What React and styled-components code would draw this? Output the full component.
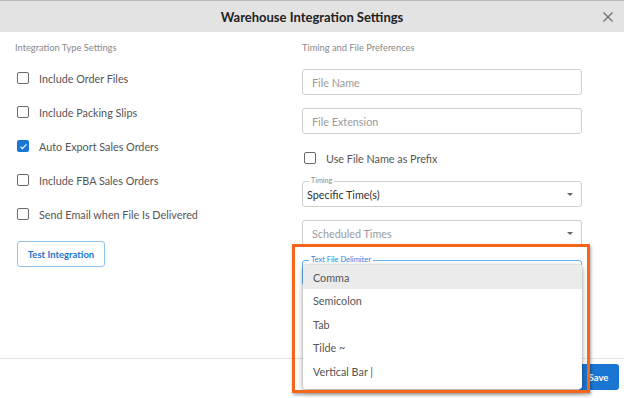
import React from "react";
import styled, { createGlobalStyle } from "styled-components";

const GlobalStyle = createGlobalStyle`
  html, body {
    margin: 0;
    padding: 0;
    background: #ffffff;
  }
  body {
    font-family: Lato, "Open Sans", "Liberation Sans", sans-serif;
  }
`;

const Modal = styled.div`
  position: relative;
  width: 624px;
  height: 398px;
  overflow: hidden;
  background: #ffffff;
  display: flex;
  flex-direction: column;
`;

const Header = styled.div`
  height: 31px;
  border-top: 1px solid #bdbdbd;
  background: #e3e3e3;
  display: flex;
  align-items: center;
  justify-content: center;
  position: relative;
  flex-shrink: 0;
`;

const Title = styled.h1`
  margin: 0;
  font-size: 13px;
  font-weight: 700;
  color: #222222;
`;

const CloseButton = styled.button`
  position: absolute;
  right: 10px;
  top: 10px;
  width: 12px;
  height: 12px;
  padding: 0;
  border: none;
  background: transparent;
  display: flex;
  cursor: pointer;
`;

const Body = styled.div`
  flex: 1;
  display: grid;
  grid-template-columns: 287px 280px;
  padding: 10px 15px 0;
`;

const Column = styled.div`
  display: flex;
  flex-direction: column;
  align-items: stretch;
`;

const SectionTitle = styled.div`
  font-size: 9.3px;
  line-height: 12px;
  color: #8a8a8a;
`;

const CheckList = styled.div`
  margin-top: 7px;
  display: flex;
  flex-direction: column;
  padding-left: 2px;
`;

const CheckRow = styled.label`
  height: ${(p) => p.$height || 34}px;
  margin-top: ${(p) => p.$top || 0}px;
  display: flex;
  align-items: center;
  gap: 10px;
  font-size: 10.8px;
  color: #555555;
`;

const Box = styled.span`
  width: 12px;
  height: 12px;
  box-sizing: border-box;
  border-radius: 2px;
  border: ${(p) => (p.$checked ? "none" : "1.5px solid #6a6a6a")};
  background: ${(p) => (p.$checked ? "#1976d2" : "#ffffff")};
  display: flex;
  align-items: center;
  justify-content: center;
  flex-shrink: 0;
`;

const OutlineButton = styled.button`
  align-self: flex-start;
  margin: 10px 0 0 2px;
  width: 88px;
  height: 26px;
  border: 1px solid #90c2ee;
  border-radius: 3px;
  background: #ffffff;
  color: #1976d2;
  font-family: inherit;
  font-size: 9.5px;
  font-weight: 700;
  cursor: pointer;
`;

const Field = styled.div`
  position: relative;
  height: 26px;
  margin-top: ${(p) => p.$top}px;
  box-sizing: border-box;
  border: 1px solid #cfcfcf;
  border-radius: 3px;
  display: flex;
  align-items: center;
  padding-left: ${(p) => (p.$filled ? 4 : 9)}px;
  padding-right: 8px;
  font-size: 10.8px;
  color: ${(p) => (p.$filled ? "#333333" : "#9a9a9a")};
`;

const FieldText = styled.span`
  flex: 1;
`;

const FloatLabel = styled.span`
  position: absolute;
  left: 6px;
  top: -6px;
  padding: 0 2px;
  background: #ffffff;
  font-size: ${(p) => (p.$blue ? 7.5 : 7.2)}px;
  line-height: 9px;
  color: ${(p) => (p.$blue ? "#1e88e5" : "#8a8a8a")};
`;

const Caret = styled.span`
  width: 0;
  height: 0;
  border-left: 3.5px solid transparent;
  border-right: 3.5px solid transparent;
  border-top: 3.5px solid #666666;
`;

const Footer = styled.div`
  height: 34px;
  border-top: 1px solid #e2e2e2;
  display: flex;
  justify-content: flex-end;
  align-items: flex-start;
  padding: 5px 5px 0;
  flex-shrink: 0;
`;

const PrimaryButton = styled.button`
  width: 41px;
  height: 26px;
  border: none;
  border-radius: 3px;
  background: #1976d2;
  color: #ffffff;
  font-family: inherit;
  font-size: 9.5px;
  font-weight: 700;
  padding: 0;
  cursor: pointer;
`;

const DelimiterField = styled.div`
  position: absolute;
  left: 302px;
  top: 260px;
  width: 280px;
  height: 26px;
  box-sizing: border-box;
  border: 1px solid #64b5f6;
  border-radius: 3px;
  background: #ffffff;
`;

const Menu = styled.ul`
  position: absolute;
  left: 303px;
  top: 265px;
  width: 279px;
  margin: 0;
  padding: 0 0 6px;
  list-style: none;
  background: #ffffff;
  border-radius: 3px;
  box-shadow: 0 2px 6px rgba(0, 0, 0, 0.35), 0 0 2px rgba(0, 0, 0, 0.2);
`;

const MenuItem = styled.li`
  height: ${(p) => (p.$active ? 24 : 23.5)}px;
  display: flex;
  align-items: center;
  padding-left: 10px;
  font-size: 10.8px;
  color: #555555;
  background: ${(p) => (p.$active ? "#ebebeb" : "transparent")};
`;

const Highlight = styled.div`
  position: absolute;
  left: 292px;
  top: 244px;
  width: 298px;
  height: 149px;
  box-sizing: border-box;
  border: 3px solid #f5661a;
  box-shadow: 1px 2px 3px rgba(0, 0, 0, 0.35);
  pointer-events: none;
`;

const CheckMark = () => (
  <svg width="9" height="9" viewBox="0 0 24 24">
    <path d="M4 12.5l5 5L20 6.5" fill="none" stroke="#fff" strokeWidth="3.2" />
  </svg>
);

const Check = ({ checked, label, height, top }) => (
  <CheckRow $height={height} $top={top}>
    <Box $checked={checked}>{checked && <CheckMark />}</Box>
    {label}
  </CheckRow>
);

const leftOptions = [
  { label: "Include Order Files" },
  { label: "Include Packing Slips" },
  { label: "Auto Export Sales Orders", checked: true },
  { label: "Include FBA Sales Orders" },
  { label: "Send Email when File Is Delivered" },
];

const delimiters = ["Comma", "Semicolon", "Tab", "Tilde ~", "Vertical Bar |"];

export default function App() {
  return (
    <>
      <GlobalStyle />
      <Modal>
        <Header>
          <Title>Warehouse Integration Settings</Title>
          <CloseButton aria-label="Close">
            <svg width="12" height="12" viewBox="0 0 12 12">
              <path d="M1.5 1.5l9 9M10.5 1.5l-9 9" stroke="#6b6b6b" strokeWidth="1.2" />
            </svg>
          </CloseButton>
        </Header>
        <Body>
          <Column>
            <SectionTitle>Integration Type Settings</SectionTitle>
            <CheckList>
              {leftOptions.map((o) => (
                <Check key={o.label} label={o.label} checked={o.checked} />
              ))}
            </CheckList>
            <OutlineButton>Test Integration</OutlineButton>
          </Column>
          <Column>
            <SectionTitle>Timing and File Preferences</SectionTitle>
            <Field $top={15}>
              <FieldText>File Name</FieldText>
            </Field>
            <Field $top={13}>
              <FieldText>File Extension</FieldText>
            </Field>
            <CheckList>
              <Check label="Use File Name as Prefix" height={16} top={9} />
            </CheckList>
            <Field $top={15} $filled>
              <FloatLabel>Timing</FloatLabel>
              <FieldText>Specific Time(s)</FieldText>
              <Caret />
            </Field>
            <Field $top={13}>
              <FieldText>Scheduled Times</FieldText>
              <Caret />
            </Field>
          </Column>
        </Body>
        <Footer>
          <PrimaryButton>Save</PrimaryButton>
        </Footer>
        <DelimiterField>
          <FloatLabel $blue>Text File Delimiter</FloatLabel>
        </DelimiterField>
        <Menu>
          {delimiters.map((d, i) => (
            <MenuItem key={d} $active={i === 0}>
              {d}
            </MenuItem>
          ))}
        </Menu>
        <Highlight />
      </Modal>
    </>
  );
}
